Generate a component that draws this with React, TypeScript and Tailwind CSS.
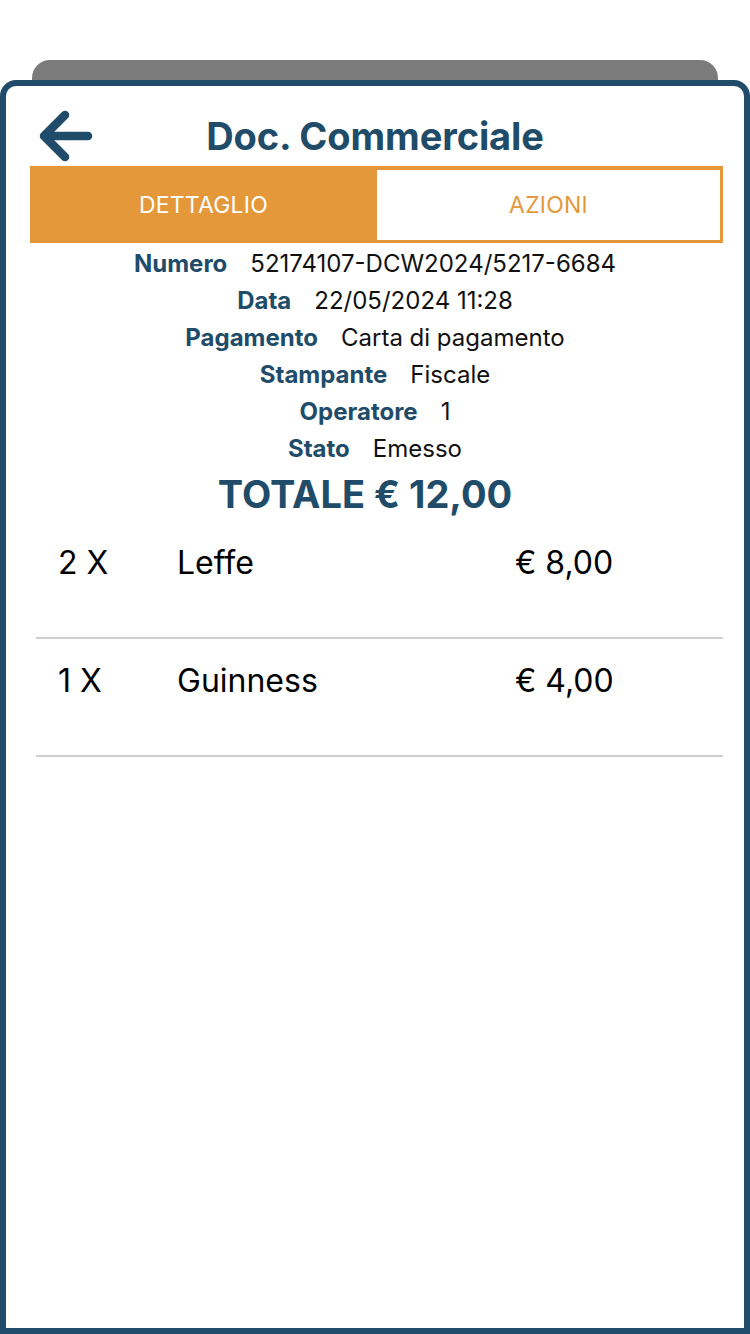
import { ReactNode } from 'react';

const details: [string, string][] = [
  ['Numero', '52174107-DCW2024/5217-6684'],
  ['Data', '22/05/2024 11:28'],
  ['Pagamento', 'Carta di pagamento'],
  ['Stampante', 'Fiscale'],
  ['Operatore', '1'],
  ['Stato', 'Emesso'],
];

const items = [
  { qty: '2 X', name: 'Leffe', price: '€ 8,00' },
  { qty: '1 X', name: 'Guinness', price: '€ 4,00' },
];

function Tab({ active, children }: { active?: boolean; children: ReactNode }) {
  return (
    <div
      className={`flex items-center justify-center text-[23px] tracking-[0.2px] ${active ? 'flex-1 bg-[#e5983a] text-white' : 'w-[343px] bg-white text-[#e5983a]'}`}
    >
      {children}
    </div>
  );
}

export default function App() {
  return (
    <div className="h-[1334px] overflow-hidden bg-white pt-[60px] font-['Inter',sans-serif]">
      {/* the sheet underneath */}
      <div className="mx-[32px] h-[40px] rounded-t-[18px] bg-[#7b7b7b]" />

      <div className="relative -mt-[20px] flex h-[1254px] flex-col rounded-t-[16px] border-[6px] border-[#204b69] bg-white">
        <div className="grid grid-cols-[1fr_auto_1fr] items-center px-[28px] pt-[22px] pb-[2px]">
          <svg width="62" height="56" viewBox="0 0 62 56" fill="none">
            <path d="M54 28H10M31 7L10 28l21 21" stroke="#204b69" strokeWidth="8.5" strokeLinecap="round" strokeLinejoin="round" />
          </svg>
          <h1 className="text-[38px] leading-[44px] font-bold tracking-[-0.1px] text-[#204b69]">Doc. Commerciale</h1>
          <div />
        </div>

        <div className="ml-[24px] mr-[21px] flex h-[77px] bg-[#e5983a] pt-[4px] pr-[3px] pb-[3px]">
          <Tab active>DETTAGLIO</Tab>
          <Tab>AZIONI</Tab>
        </div>

        <div className="flex flex-col items-center pt-[2px]">
          {details.map(([label, value]) => (
            <div key={label} className="flex h-[37px] items-center gap-[23px] text-[24px]">
              <span className="font-bold text-[#204b69]">{label}</span>
              <span className="text-[#111]">{value}</span>
            </div>
          ))}
          <div className="flex h-[54px] items-center pr-[20px] text-[38px] font-bold text-[#204b69]">TOTALE € 12,00</div>
        </div>

        <div className="ml-[30px] mr-[21px]">
          {items.map((it) => (
            <div key={it.name} className="border-b-2 border-[#cfcfcf]">
              <div className="grid h-[116px] grid-cols-[119px_338px_auto] pt-[22px] pl-[22px] text-[32px] leading-[40px] text-black">
                <span>{it.qty}</span>
                <span>{it.name}</span>
                <span>{it.price}</span>
              </div>
            </div>
          ))}
        </div>
      </div>
    </div>
  );
}
